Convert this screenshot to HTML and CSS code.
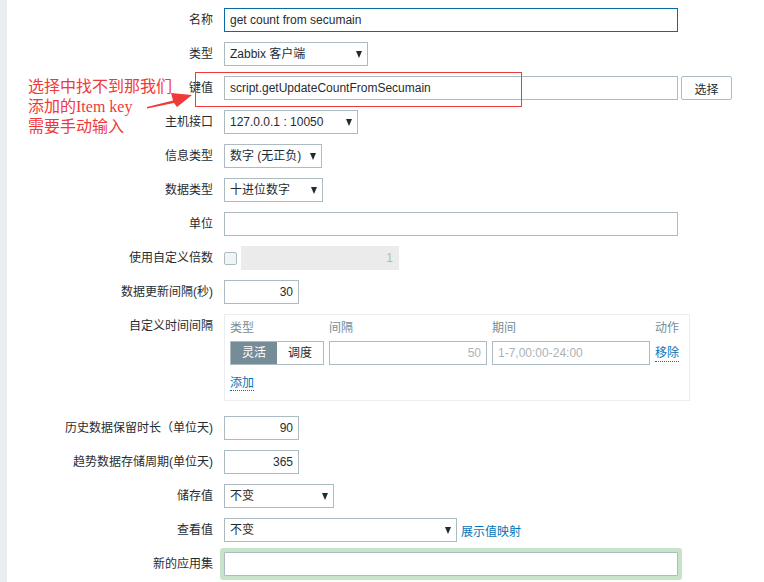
FILE: index.html
```html
<!DOCTYPE html>
<html lang="zh">
<head>
<meta charset="utf-8">
<title>Item</title>
<link rel="stylesheet" href="styles.css">
</head>
<body>
<div class="page">
  <div class="strip"></div>
  <div class="form">
    <div class="lbl">名称</div>
    <div class="fld"><div class="inp w-full focused">get count from secumain</div></div>

    <div class="lbl">类型</div>
    <div class="fld"><div class="sel w-144">Zabbix 客户端<span class="arr"></span></div></div>

    <div class="lbl">键值</div>
    <div class="fld"><div class="inp w-full">script.getUpdateCountFromSecumain</div><button class="btn">选择</button></div>

    <div class="lbl">主机接口</div>
    <div class="fld"><div class="sel w-134">127.0.0.1 : 10050<span class="arr"></span></div></div>

    <div class="lbl">信息类型</div>
    <div class="fld"><div class="sel w-98">数字 (无正负)<span class="arr"></span></div></div>

    <div class="lbl">数据类型</div>
    <div class="fld"><div class="sel w-99">十进位数字<span class="arr"></span></div></div>

    <div class="lbl">单位</div>
    <div class="fld"><div class="inp w-full"></div></div>

    <div class="lbl">使用自定义倍数</div>
    <div class="fld gap4"><span class="chk"></span><div class="inp w-158 disabled num">1</div></div>

    <div class="lbl">数据更新间隔(秒)</div>
    <div class="fld"><div class="inp w-75 num">30</div></div>

    <div class="lbl">自定义时间间隔</div>
    <div class="fld top">
      <div class="intervals">
        <div class="ihead">类型</div>
        <div class="ihead">间隔</div>
        <div class="ihead">期间</div>
        <div class="ihead">动作</div>
        <div class="seg"><span class="seg-on">灵活</span><span class="seg-off">调度</span></div>
        <div class="inp grey num">50</div>
        <div class="inp grey">1-7,00:00-24:00</div>
        <a class="link dotted">移除</a>
        <div class="add"><a class="link dotted">添加</a></div>
      </div>
    </div>

    <div class="lbl">历史数据保留时长（单位天)</div>
    <div class="fld"><div class="inp w-75 num">90</div></div>

    <div class="lbl">趋势数据存储周期(单位天)</div>
    <div class="fld"><div class="inp w-75 num">365</div></div>

    <div class="lbl">储存值</div>
    <div class="fld"><div class="sel w-110">不变<span class="arr"></span></div></div>

    <div class="lbl">查看值</div>
    <div class="fld gap4"><div class="sel w-233">不变<span class="arr"></span></div><a class="link">展示值映射</a></div>

    <div class="lbl">新的应用集</div>
    <div class="fld"><div class="inp w-full glow"></div></div>
  </div>

  <div class="note"><div>选择中找不到那我们</div><div>添加的Item key</div><div>需要手动输入</div></div>
  <svg class="arrow" width="60" height="30" viewBox="0 0 60 30">
    <polygon points="0,20 26,13.5 24,6 45,8 30,20 27,16 0,21.5" fill="#f03a3a"/>
  </svg>
  <div class="redbox"></div>
</div>
</body>
</html>
```

FILE: styles.css
```css
html, body {
  margin: 0;
  padding: 0;
  background: #ffffff;
}

body {
  font-family: "Liberation Sans", Arial, "Noto Sans CJK SC", sans-serif;
  font-size: 12px;
  color: #1f2c33;
}

.page {
  position: relative;
  display: flex;
  width: 764px;
  height: 582px;
  overflow: hidden;
}

.strip {
  width: 7px;
  flex: none;
  background: #ebeef0;
}

.form {
  display: grid;
  grid-template-columns: 206px 1fr;
  column-gap: 11px;
  row-gap: 10px;
  padding-top: 8px;
  align-content: start;
}

.lbl {
  text-align: right;
  line-height: 24px;
  white-space: nowrap;
}

.fld {
  display: flex;
  align-items: center;
  gap: 3px;
  min-height: 24px;
}

.fld.gap4 {
  gap: 4px;
}

.fld.top {
  align-items: flex-start;
  margin-bottom: 5px;
}

.inp, .sel {
  box-sizing: border-box;
  height: 24px;
  border: 1px solid #acbbc2;
  background: #fff;
  padding: 0 5px;
  line-height: 22px;
  white-space: nowrap;
  overflow: hidden;
}

.sel {
  display: flex;
  align-items: center;
}

.arr {
  margin-left: auto;
  margin-right: 0;
  width: 0;
  height: 0;
  border-left: 3.5px solid transparent;
  border-right: 3.5px solid transparent;
  border-top: 7px solid #1f2c33;
}

.focused {
  border-color: #0a6aa5;
}

.num {
  text-align: right;
}

.disabled {
  background: #ebebeb;
  border-color: #ebebeb;
  color: #acbbc2;
}

.grey {
  color: #acb3b7;
}

.w-full { width: 454px; }
.w-144 { width: 144px; }
.w-134 { width: 134px; }
.w-98 { width: 98px; }
.w-99 { width: 99px; }
.w-110 { width: 110px; }
.w-233 { width: 233px; }
.w-158 { width: 158px; }
.w-75 { width: 75px; }

.btn {
  box-sizing: border-box;
  width: 51px;
  height: 24px;
  border: 1px solid #acbbc2;
  border-radius: 2px;
  background: #fff;
  color: #1f2c33;
  font: inherit;
  padding: 0;
}

.chk {
  box-sizing: border-box;
  width: 13px;
  height: 13px;
  border: 1px solid #acbbc2;
  border-radius: 2px;
  background: #f2f4f5;
}

.intervals {
  box-sizing: border-box;
  width: 466px;
  border: 1px solid #ebeef0;
  padding: 4px 5px 8px;
  display: grid;
  grid-template-columns: 94px 158px 158px auto;
  column-gap: 5px;
  row-gap: 4px;
}

.ihead {
  line-height: 18px;
  color: #768d99;
}

.seg {
  box-sizing: border-box;
  display: flex;
  height: 24px;
  border: 1px solid #acbbc2;
}

.seg span {
  flex: 1;
  text-align: center;
  line-height: 22px;
}

.seg-on {
  background: #768d99;
  color: #fff;
}

.seg-off {
  background: #fff;
}

.link {
  color: #0275b8;
  text-decoration: none;
}

.dotted {
  border-bottom: 1px dotted #0275b8;
  line-height: 16px;
}

.intervals > .link {
  align-self: center;
  justify-self: start;
}

.add {
  grid-column: 1 / -1;
  margin-top: 5px;
  line-height: 18px;
}

.glow {
  box-shadow: 0 0 0 4px #c7e3c8;
  border-radius: 1px;
}

.note {
  position: absolute;
  left: 28px;
  top: 77px;
  font-family: "Liberation Serif", "Noto Sans CJK SC", serif;
  font-size: 16px;
  color: #f03a3a;
  white-space: nowrap;
}

.note div {
  height: 20px;
  line-height: 20px;
}

.arrow {
  position: absolute;
  left: 147px;
  top: 87px;
}

.redbox {
  position: absolute;
  left: 195px;
  top: 72px;
  width: 325px;
  height: 33px;
  border: 1px solid #ee3a3a;
}
```
